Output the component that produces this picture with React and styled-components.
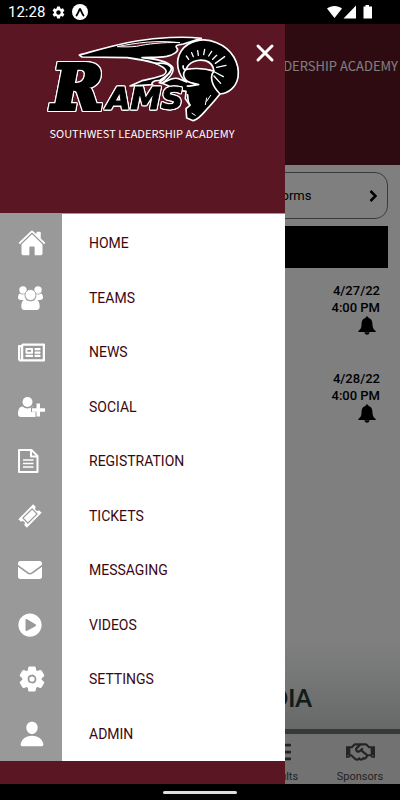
import React, { useState } from "react";
import styled, { createGlobalStyle } from "styled-components";
import { FaRegNewspaper, FaRegHandshake, FaPlayCircle, FaList, FaEnvelope } from "react-icons/fa";
import { IoHome, IoPerson, IoSettings } from "react-icons/io5";
import { MdSettings } from "react-icons/md";

const menuItems = [
    { label: "HOME", icon: <IoHome size={28} /> },
    { label: "TEAMS", icon: <TeamsIcon /> },
    { label: "NEWS", icon: <FaRegNewspaper size={27} /> },
    { label: "SOCIAL", icon: <SocialIcon /> },
    { label: "REGISTRATION", icon: <DocumentIcon /> },
    { label: "TICKETS", icon: <TicketIcon /> },
    { label: "MESSAGING", icon: <FaEnvelope size={24} /> },
    { label: "VIDEOS", icon: <FaPlayCircle size={24} /> },
    { label: "SETTINGS", icon: <IoSettings size={28} /> },
    { label: "ADMIN", icon: <IoPerson size={28} /> },
];

const games = [
    { date: "4/27/22", time: "4:00 PM" },
    { date: "4/28/22", time: "4:00 PM" },
];

export default function App() {
    const [open, setOpen] = useState(true);

    return (
        <Screen>
            <GlobalStyle />
            <StatusBar>
                <span>12:28</span>
                <MdSettings size={15} />
                <ExpoIcon />
                <Spacer />
                <SignalIcons />
            </StatusBar>

            <Body>
                <Page>
                    <PageHeader>
                        <PageTitle>SOUTHWEST LEADERSHIP ACADEMY</PageTitle>
                    </PageHeader>
                    <Content>
                        <LinkGrid>
                            <LinkCard type="button">
                                <span>Teams</span>
                                <Chevron />
                            </LinkCard>
                            <LinkCard type="button">
                                <span>Forms</span>
                                <Chevron />
                            </LinkCard>
                        </LinkGrid>
                        <BlackBar />
                        {games.map((game) => (
                            <Game key={game.date}>
                                <span>{game.date}</span>
                                <span>{game.time}</span>
                                <BellButton type="button" aria-label="Notify me">
                                    <BellIcon />
                                </BellButton>
                            </Game>
                        ))}
                    </Content>
                    <Sponsor>MEDIA</Sponsor>
                    <TabBar>
                        <Tab href="#home"><IoHome size={22} />Home</Tab>
                        <Tab href="#teams"><IoPerson size={22} />Teams</Tab>
                        <Tab href="#news"><FaRegNewspaper size={22} />News</Tab>
                        <Tab href="#results"><FaList size={22} />Results</Tab>
                        <Tab href="#sponsors"><FaRegHandshake size={29} />Sponsors</Tab>
                    </TabBar>
                </Page>

                {open ? (
                    <>
                        <Backdrop onClick={() => setOpen(false)} />
                        <Drawer>
                            <DrawerHeader>
                                <RamsLogo />
                                <CloseButton type="button" aria-label="Close menu" onClick={() => setOpen(false)}>
                                    <svg width="20" height="20" viewBox="0 0 20 20" stroke="#fff" strokeWidth="3" strokeLinecap="round">
                                        <path d="M3 3 17 17M17 3 3 17" />
                                    </svg>
                                </CloseButton>
                            </DrawerHeader>
                            <Menu>
                                {menuItems.map((item) => (
                                    <MenuItem key={item.label} href={"#" + item.label.toLowerCase()}>
                                        <MenuIcon>{item.icon}</MenuIcon>
                                        <MenuLabel>{item.label}</MenuLabel>
                                    </MenuItem>
                                ))}
                            </Menu>
                            <DrawerFooter />
                        </Drawer>
                    </>
                ) : null}
            </Body>

            <SystemNav>
                <HomeHandle />
            </SystemNav>
        </Screen>
    );
}

function RamsLogo() {
    return (
        <Logo viewBox="0 0 630 360" role="img" aria-label="Rams">
            {/* feathers of the horn */}
            <g fill="#000" stroke="#fff" strokeWidth="5" strokeLinejoin="round">
                <path d="M118 75C170 61 225 44 290 33C350 23 430 18 484 25L430 42C400 46 408 50 412 56C416 64 402 74 380 79C350 84 330 81 306 83C350 88 385 94 398 112C404 128 388 144 366 160L358 158C376 146 388 132 384 120C374 102 322 92 262 83L126 81Z" />
                <path d="M346 100C372 112 388 122 372 134C356 142 330 146 306 152L270 168L338 164C330 158 344 150 358 152C378 140 396 128 394 114C388 100 366 98 346 100Z" />
                <path fill="#5b1623" strokeWidth="3" d="M232 50C290 38 350 30 420 38C370 36 320 42 290 49C270 51 250 51 232 50Z" />
            </g>
            {/* head and curl */}
            <g fill="#000" stroke="#fff" strokeWidth="5" strokeLinejoin="round">
                <path d="M366 160C390 148 402 142 416 146L440 156C412 136 404 92 424 62C444 34 488 20 530 38C576 56 600 100 594 142C588 172 566 190 540 192C524 212 512 226 500 238C488 252 476 268 460 272L440 264L438 236L450 226L436 206L438 184C412 182 390 168 366 160Z" />
                <path fill="#5b1623" d="M438 118C446 96 474 86 496 92C510 96 520 108 522 124C500 116 466 114 438 118Z" />
                <path fill="none" d="M438 118C424 132 432 152 452 158L476 164C462 164 456 170 440 168M438 118C430 120 428 112 430 106M522 124C508 138 514 166 540 192M450 226C440 212 446 204 442 192" />
            </g>
            <g stroke="#fff" strokeWidth="4" strokeLinecap="round">
                <path d="M446 88 439 78M460 80 455 68M475 76 473 62M491 74 494 58M506 78 515 64M518 88 530 76M526 100 554 80M530 112 558 106M524 126 550 140M522 138 542 160" />
                <path d="M512 196 500 214M500 204 496 224M456 250 466 256" strokeWidth="3" />
            </g>
            <LogoLetter x="36" y="236" fontSize="184">R</LogoLetter>
            <LogoLetter x="200" y="238" fontSize="92" $sans>AMS</LogoLetter>
            <LogoCaption x="306" y="324" textAnchor="middle">SOUTHWEST LEADERSHIP ACADEMY</LogoCaption>
        </Logo>
    );
}

function ExpoIcon() {
    return (
        <svg width="16" height="16" viewBox="0 0 16 16">
            <circle cx="8" cy="8" r="8" fill="#fff" />
            <path d="M4.500 11.500C6 9.500 7 6 8 5C9 6 10 9.500 11.500 11.500" fill="none" stroke="#000" strokeWidth="1.800" strokeLinecap="round" strokeLinejoin="round" />
        </svg>
    );
}

function SignalIcons() {
    return (
        <svg width="46" height="14" viewBox="0 0 46 14" fill="#fff">
            <path d="M0 3.500C4 0 11 0 15 3.500L7.500 13Z" />
            <path d="M29 0.500V13.500H16.500Z" />
            <path d="M38.500 0H42V1.500H45V13.500H36.500V1.500H38.500Z" />
        </svg>
    );
}

function TeamsIcon() {
    return (
        <svg width="25" height="24" viewBox="0 0 25 24" fill="#fff">
            <circle cx="5" cy="4" r="3.700" />
            <circle cx="20" cy="4" r="3.700" />
            <path d="M2 7.500C3 8.500 5 8.800 7 8C6.500 11 7 12.500 8.500 14H3C1 14 0 13 0 11.500C0 9.500 1 7.500 2 7.500Z" />
            <path d="M23 7.500C22 8.500 20 8.800 18 8C18.500 11 18 12.500 16.500 14H22C24 14 25 13 25 11.500C25 9.500 24 7.500 23 7.500Z" />
            <path d="M7.500 13.200C10 16 15 16 17.500 13.200C20.500 13.500 21.700 17 21.700 20.500C21.700 23 20.500 24 18.500 24H6.500C4.500 24 3.300 23 3.300 20.500C3.300 17 4.500 13.500 7.500 13.200Z" />
            <circle cx="12.500" cy="9" r="5.500" stroke="#999" strokeWidth="0.800" />
        </svg>
    );
}

function SocialIcon() {
    return (
        <svg width="27" height="20" viewBox="0 0 27 20" fill="#fff">
            <circle cx="9.500" cy="5" r="5" />
            <path d="M4.500 9.500C7.500 12 11.500 12 14.500 9.500L15.500 10H13V15H17.500V20H3C1 20 0 19 0 17C0 13 1.500 9.500 4.500 9.500Z" />
            <path d="M18.500 6.500H22V11.200H27V14.800H22V19.500H18.500V14.800H14V11.200H18.500Z" />
        </svg>
    );
}

function DocumentIcon() {
    return (
        <svg width="21" height="24" viewBox="0 0 21 24" fill="none" stroke="#fff" strokeWidth="2" strokeLinejoin="round">
            <path d="M1 1H13.500L19.500 7V23H1Z" />
            <path d="M13 1V7.500H19.500" />
            <path d="M5 11H15.500M5 14.500H15.500M5 18H15.500" strokeWidth="1.600" />
        </svg>
    );
}

function TicketIcon() {
    return (
        <svg width="24" height="24" viewBox="0 0 24 24">
            <g transform="rotate(-45 12 12)">
                <path fill="#fff" d="M1.500 6H22.500V9.800A2.200 2.200 0 0 0 22.500 14.200V18H1.500V14.200A2.200 2.200 0 0 0 1.500 9.800Z" />
                <path fill="none" stroke="#999" strokeWidth="1.200" d="M5.500 8.500H18.500V15.500H5.500Z" />
            </g>
        </svg>
    );
}

function Chevron() {
    return (
        <svg width="8" height="12" viewBox="0 0 8 12" fill="none" stroke="#000" strokeWidth="2.500">
            <path d="M1.500 1 6.500 6 1.500 11" />
        </svg>
    );
}

function BellIcon() {
    return (
        <svg width="18" height="19" viewBox="0 0 18 19">
            <path d="M9 0.500C10 0.500 10.500 1.200 10.500 2C14 3 14.500 6 14.500 9C14.500 12 16 14 17.700 15V16H0.300V15C2 14 3.500 12 3.500 9C3.500 6 4 3 7.500 2C7.500 1.200 8 0.500 9 0.500Z" />
            <path d="M6.500 16.300H11.500C11.500 17.800 10.500 18.800 9 18.800C7.500 18.800 6.500 17.800 6.500 16.300Z" />
        </svg>
    );
}

const GlobalStyle = createGlobalStyle`
* {
    box-sizing: border-box;
}
body {
    margin: 0;
    font-family: Roboto, sans-serif;
}
a {
    color: inherit;
    text-decoration: none;
}
button {
    font: inherit;
    color: inherit;
    border: none;
    padding: 0;
    background: none;
}
svg {
    display: block;
}
`
const Screen = styled.div`
display: flex;
flex-direction: column;
min-height: 100vh;
overflow: hidden;
`
const StatusBar = styled.div`
display: flex;
align-items: center;
gap: 6px;
height: 24px;
padding: 0 27px 0 8px;
background: #000;
color: #fff;
font-size: 15px;
`
const Spacer = styled.div`
flex: 1;
`
const Body = styled.div`
display: flex;
flex: 1;
position: relative;
`
const Page = styled.main`
display: flex;
flex-direction: column;
flex: 1;
min-width: 0;
background: #fff;
`
const PageHeader = styled.header`
display: flex;
justify-content: flex-end;
height: 141px;
padding: 30px 2px 0;
background: #5b1623;
overflow: hidden;
`
const PageTitle = styled.h1`
margin: 0;
font-family: "Noto Sans CJK SC", sans-serif;
font-weight: 400;
font-size: 13px;
line-height: 24px;
white-space: nowrap;
color: #fff;
`
const Content = styled.section`
flex: 1;
padding: 7px 12px;
`
const LinkGrid = styled.div`
display: grid;
grid-template-columns: 1fr 1fr;
gap: 12px;
`
const LinkCard = styled.button`
display: flex;
align-items: center;
height: 47px;
padding: 0 10px;
border: 1px solid #777;
border-radius: 13px;
font-size: 13px;

span {
    flex: 1;
}
`
const BlackBar = styled.div`
height: 42px;
margin-top: 7px;
background: #000;
`
const Game = styled.div`
display: flex;
flex-direction: column;
align-items: flex-end;
height: 88px;
padding: 14px 8px 0;
font-weight: 500;
font-size: 13px;
line-height: 17px;
`
const BellButton = styled.button`
padding: 0 4px;
`
const Sponsor = styled.div`
height: 88px;
padding: 40px 22% 0 0;
background: linear-gradient(#fff, #cfd3d2);
font-family: Lato, sans-serif;
font-weight: 700;
font-size: 24px;
line-height: 34px;
text-align: right;
color: #263835;
`
const TabBar = styled.nav`
display: flex;
height: 55px;
border-top: 5px solid #707070;
background: #e4e4e4;
`
const Tab = styled.a`
display: flex;
flex: 1;
flex-direction: column;
align-items: center;
justify-content: space-between;
height: 50px;
font-size: 11px;
line-height: 14px;
color: #484848;

svg {
    height: 36px;
}
`
const Backdrop = styled.div`
position: absolute;
inset: 0;
background: rgba(0, 0, 0, 0.5);
`
const Drawer = styled.aside`
position: absolute;
top: 0;
bottom: 0;
left: 0;
display: flex;
flex-direction: column;
width: 285px;
background: #fff;
`
const DrawerHeader = styled.div`
display: flex;
align-items: flex-start;
justify-content: space-between;
height: 190px;
padding: 6px 10px 0 40px;
border-bottom: 1px solid #999;
background: #5b1623;
`
const Logo = styled.svg`
width: 210px;
flex: none;
`
const LogoLetter = styled.text`
font-family: ${(props) => (props.$sans ? '"DejaVu Sans", sans-serif' : '"DejaVu Serif", serif')};
font-weight: 700;
font-style: italic;
fill: #000;
stroke: #000;
stroke-width: ${(props) => (props.$sans ? "3px" : "12px")};
filter: drop-shadow(3px 0 #fff) drop-shadow(-3px 0 #fff) drop-shadow(0 3px #fff) drop-shadow(0 -3px #fff);
`
const LogoCaption = styled.text`
font-family: "Noto Sans CJK SC", sans-serif;
font-size: 33px;
fill: #fff;
`
const CloseButton = styled.button`
margin-top: 13px;
`
const Menu = styled.nav`
display: flex;
flex-direction: column;
flex: 1;
padding-top: 2px;
background: linear-gradient(90deg, #999 62px, #fff 62px);
`
const MenuItem = styled.a`
display: flex;
align-items: center;
flex: 1;
`
const MenuIcon = styled.span`
width: 62px;
padding-left: 18px;
color: #fff;
`
const MenuLabel = styled.span`
padding-left: 27px;
font-size: 14px;
color: #3d0710;
`
const DrawerFooter = styled.div`
height: 23px;
background: #5b1623;
`
const SystemNav = styled.div`
display: flex;
align-items: center;
justify-content: center;
height: 16px;
background: #000;
`
const HomeHandle = styled.div`
width: 74px;
height: 3px;
border-radius: 2px;
background: #ddd;
`
